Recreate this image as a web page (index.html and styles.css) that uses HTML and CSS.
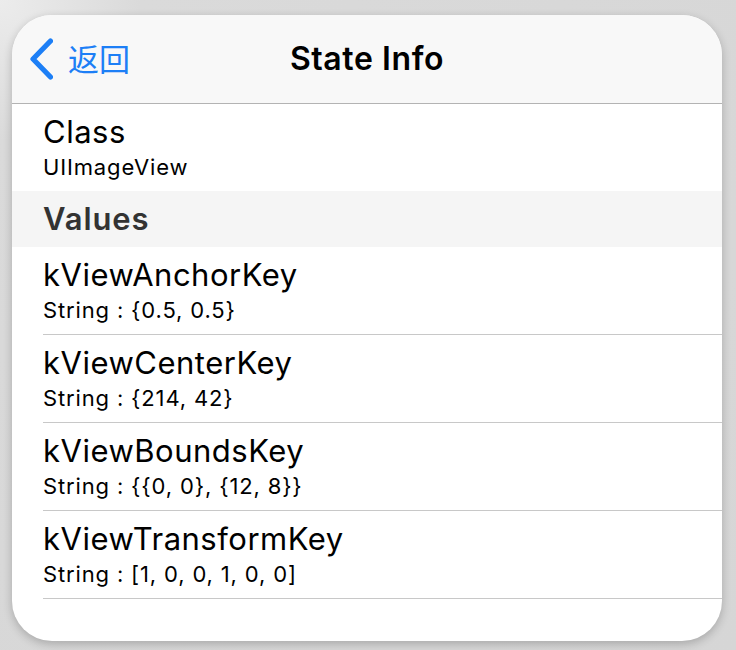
FILE: index.html
```html
<!DOCTYPE html>
<html lang="zh">
<head>
<meta charset="utf-8">
<title>State Info</title>
<link rel="stylesheet" href="styles.css">
</head>
<body>
<div class="card">
  <header class="nav">
    <div class="back">
      <svg class="chev" width="24" height="42" viewBox="0 0 24 42"><path d="M21.5 3 L4 21 L21.5 39" fill="none" stroke="#1d7ff6" stroke-width="5.2" stroke-linecap="round" stroke-linejoin="round"/></svg>
      <span class="back-label">返回</span>
    </div>
    <div class="title">State Info</div>
    <div></div>
  </header>
  <div class="row first">
    <div class="row-inner">
      <div class="key">Class</div>
      <div class="val">UIImageView</div>
    </div>
  </div>
  <div class="section">Values</div>
  <div class="row">
    <div class="row-inner sep">
      <div class="key">kViewAnchorKey</div>
      <div class="val">String : {0.5, 0.5}</div>
    </div>
  </div>
  <div class="row">
    <div class="row-inner sep">
      <div class="key">kViewCenterKey</div>
      <div class="val">String : {214, 42}</div>
    </div>
  </div>
  <div class="row">
    <div class="row-inner sep">
      <div class="key">kViewBoundsKey</div>
      <div class="val">String : {{0, 0}, {12, 8}}</div>
    </div>
  </div>
  <div class="row">
    <div class="row-inner sep">
      <div class="key">kViewTransformKey</div>
      <div class="val">String : [1, 0, 0, 1, 0, 0]</div>
    </div>
  </div>
</div>
</body>
</html>
```
FILE: styles.css
```css
html, body {
  margin: 0;
  padding: 0;
}
body {
  width: 736px;
  height: 650px;
  overflow: hidden;
  background: radial-gradient(circle at 0 0, #ececec 0, #dadada 140px, #d6d6d6 100%);
  padding: 15px 14px 0 12px;
  box-sizing: border-box;
  font-family: Inter, "Noto Sans", "Noto Sans CJK SC", sans-serif;
}
.card {
  width: 710px;
  height: 626px;
  background: #fff;
  border-radius: 40px;
  overflow: hidden;
  box-shadow: 0 3px 10px rgba(0,0,0,0.22);
}
.nav {
  height: 89px;
  box-sizing: border-box;
  background: #f8f8f8;
  border-bottom: 1px solid #b3b3b3;
  display: grid;
  grid-template-columns: 1fr auto 1fr;
  align-items: center;
}
.back {
  display: flex;
  align-items: center;
  padding-left: 17px;
  gap: 15px;
  color: #1d7ff6;
}
.chev {
  display: block;
  margin-top: -1px;
}
.back-label {
  font-family: "Noto Sans CJK SC", sans-serif;
  font-size: 31px;
  line-height: 36px;
  margin-top: -3px;
}
.title {
  font-size: 32px;
  font-weight: 600;
  color: #000;
  letter-spacing: 0.6px;
  margin-top: -2px;
}
.row {
  height: 88px;
  background: #fff;
}
.row.first {
  height: 87px;
}
.row-inner {
  margin-left: 31px;
  height: 100%;
  box-sizing: border-box;
  padding-top: 11px;
}
.row-inner.sep {
  border-bottom: 1px solid #c8c8c8;
}
.key {
  font-size: 31px;
  line-height: 34px;
  letter-spacing: 0.5px;
  color: #000;
}
.val {
  font-size: 22px;
  line-height: 26px;
  letter-spacing: 0.85px;
  margin-top: 5px;
  color: #000;
}
.section {
  height: 56px;
  background: #f5f5f5;
  padding-left: 31px;
  font-size: 31px;
  font-weight: 600;
  letter-spacing: 0.9px;
  color: #333;
  line-height: 56px;
  box-sizing: border-box;
}
```
